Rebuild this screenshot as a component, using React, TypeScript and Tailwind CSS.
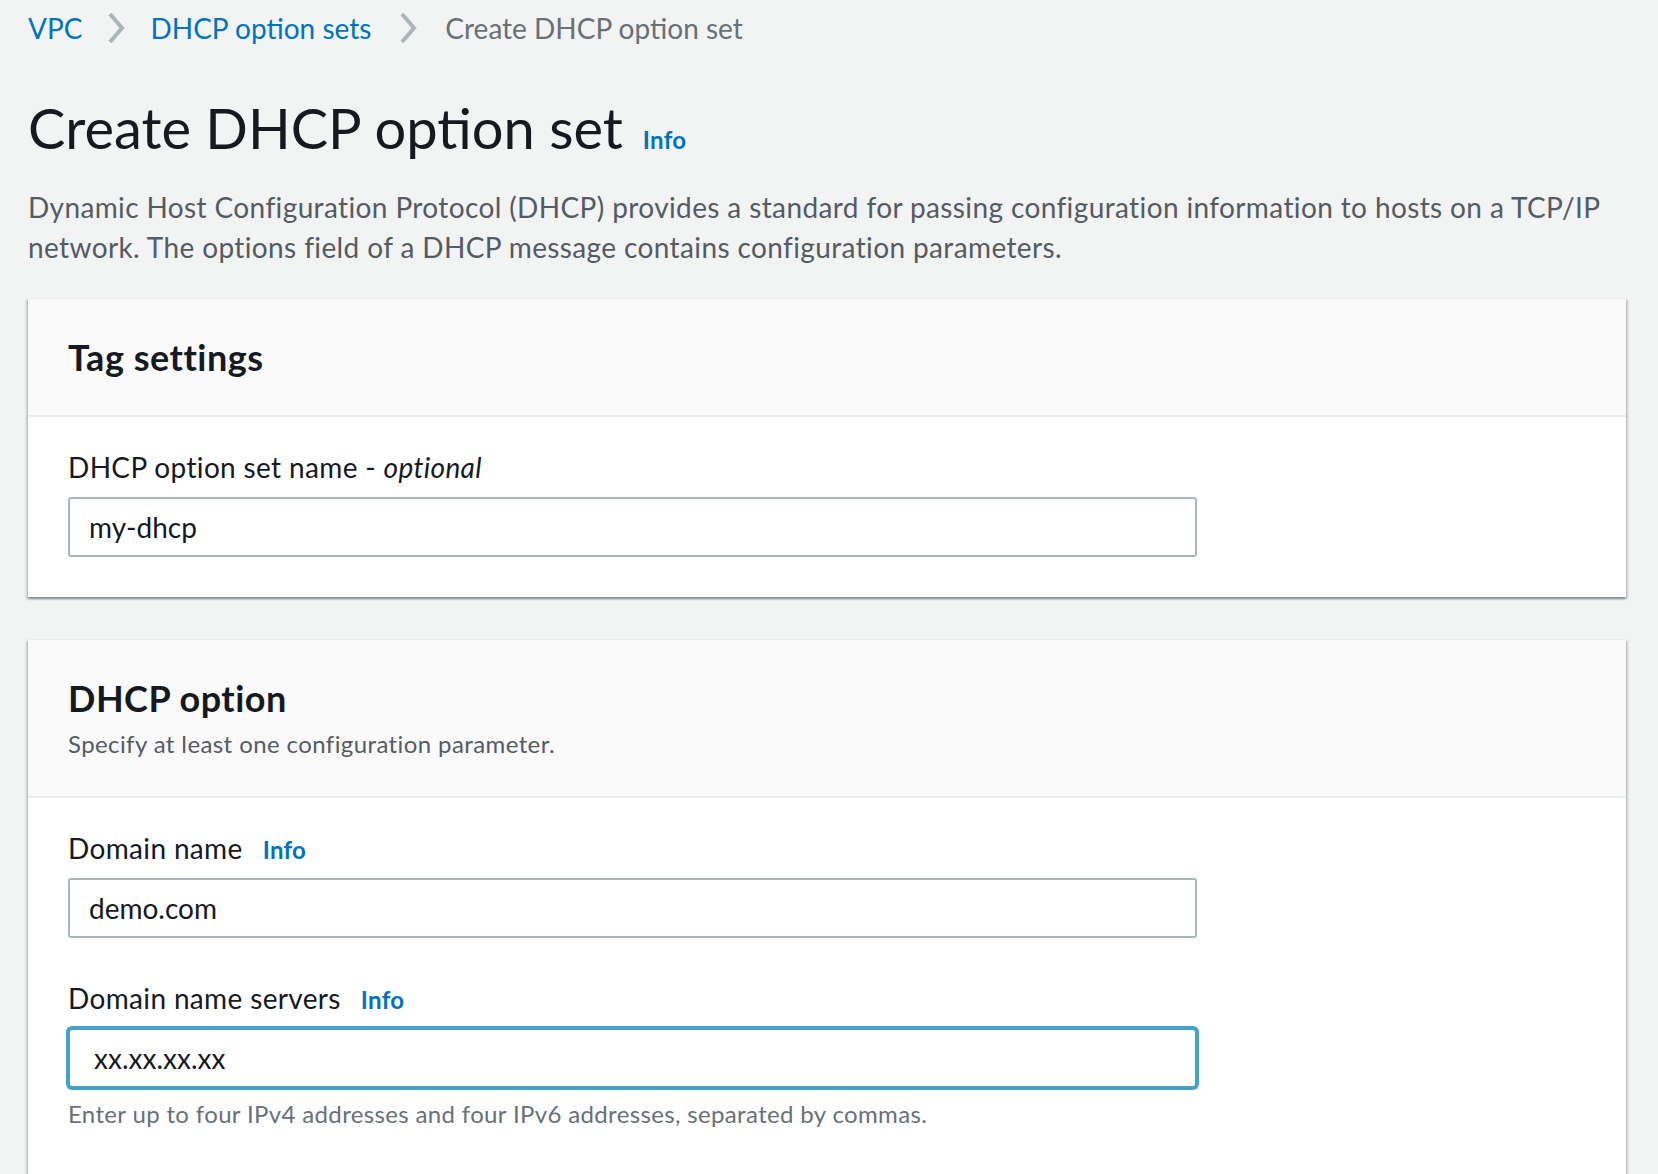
const FONT = "font-['Lato','Liberation_Sans',sans-serif]";

function Chevron() {
  return (
    <svg width="20" height="32" viewBox="0 0 20 32" className="shrink-0">
      <path d="M4 2 L16 16 L4 30" fill="none" stroke="#aab7b8" strokeWidth="4" />
    </svg>
  );
}

function InfoLink({ className = '' }: { className?: string }) {
  return (
    <a className={`text-[24px] font-bold leading-[28px] tracking-[0.3px] text-[#0073bb] ${className}`}>
      Info
    </a>
  );
}

function Field({
  label,
  value,
  info,
  focused,
  help,
}: {
  label: React.ReactNode;
  value: string;
  info?: boolean;
  focused?: boolean;
  help?: string;
}) {
  return (
    <div>
      <div className="flex h-[40px] items-baseline gap-5 text-[28px] leading-[40px] tracking-[0.35px] text-[#16191f]">
        <span>{label}</span>
        {info && <InfoLink />}
      </div>
      <div
        className={
          focused
            ? 'mt-[10px] flex h-[60px] w-[1129px] items-center rounded-[4px] border-2 border-[#44a2c8] bg-white pl-[24px] shadow-[0_0_0_2px_#44a2c8]'
            : 'mt-[10px] flex h-[60px] w-[1129px] items-center rounded-[3px] border-2 border-[#aab7b8] bg-white pl-[19px]'
        }
      >
        <span className="text-[28px] text-[#16191f]">{value}</span>
      </div>
      {help && (
        <p className="mt-[10px] text-[24px] leading-[32px] tracking-[0.35px] text-[#687078]">{help}</p>
      )}
    </div>
  );
}

function Card({
  title,
  subtitle,
  bodyClass = 'pb-10',
  children,
}: {
  title: string;
  subtitle?: string;
  bodyClass?: string;
  children: React.ReactNode;
}) {
  return (
    <section className="border-t border-[#eaeded] bg-white shadow-[0_2px_2px_0_rgba(0,28,36,0.3),2px_2px_2px_0_rgba(0,28,36,0.15),-2px_2px_2px_0_rgba(0,28,36,0.15)]">
      <div className="border-b-2 border-[#eaeded] bg-[#fafafa] px-10 py-9">
        <h2 className="text-[36px] font-bold leading-[44px] tracking-[0.5px] text-[#16191f]">{title}</h2>
        {subtitle && (
          <p className="mt-[8px] text-[24px] leading-[32px] tracking-[0.4px] text-[#545b64]">{subtitle}</p>
        )}
      </div>
      <div className={`flex flex-col gap-10 px-10 pt-[30px] ${bodyClass}`}>{children}</div>
    </section>
  );
}

export default function App() {
  return (
    <div className={`min-h-screen bg-[#f2f3f3] pl-[28px] pr-[32px] pt-[8px] ${FONT}`}>
      <nav className="flex h-[40px] items-center text-[28px]">
        <a className="text-[#0073bb]">VPC</a>
        <span className="mx-[24px] flex">
          <Chevron />
        </span>
        <a className="text-[#0073bb]">DHCP option sets</a>
        <span className="mx-[27px] flex">
          <Chevron />
        </span>
        <span className="text-[#687078]">Create DHCP option set</span>
      </nav>

      <div className="mt-[48px] flex items-baseline gap-5">
        <h1 className="text-[56px] leading-[64px] text-[#16191f]">Create DHCP option set</h1>
        <InfoLink />
      </div>

      <p className="mt-[27px] text-[28px] leading-[40px] tracking-[0.38px] text-[#545b64]">
        Dynamic Host Configuration Protocol (DHCP) provides a standard for passing configuration
        information to hosts on a TCP/IP network. The options field of a DHCP message contains
        configuration parameters.
      </p>

      <div className="mt-[31px] flex flex-col gap-[42px]">
        <Card title="Tag settings">
          <Field
            label={
              <>
                DHCP option set name - <i>optional</i>
              </>
            }
            value="my-dhcp"
          />
        </Card>

        <Card
          title="DHCP option"
          subtitle="Specify at least one configuration parameter."
          bodyClass="pb-[160px]"
        >
          <Field label="Domain name" value="demo.com" info />
          <Field
            label="Domain name servers"
            value="xx.xx.xx.xx"
            info
            focused
            help="Enter up to four IPv4 addresses and four IPv6 addresses, separated by commas."
          />
        </Card>
      </div>
    </div>
  );
}
